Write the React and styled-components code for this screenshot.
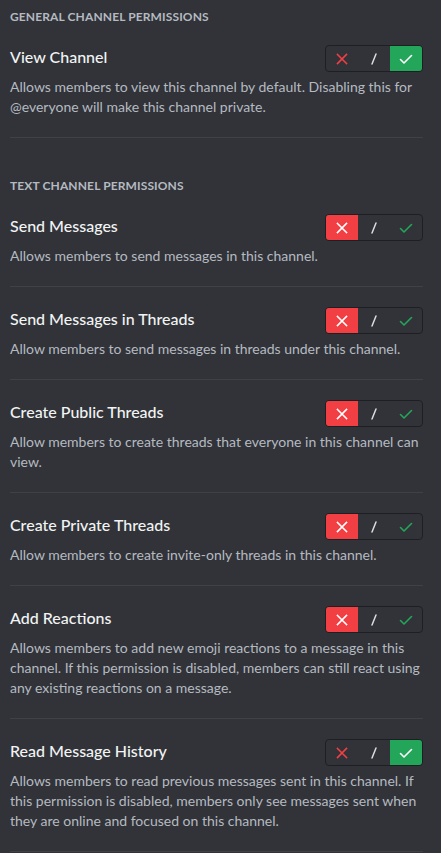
import React from "react";
import styled, { createGlobalStyle } from "styled-components";

const Global = createGlobalStyle`
  html, body { margin: 0; padding: 0; background: #313338; }
  body { font-family: Lato, "Noto Sans", sans-serif; -webkit-font-smoothing: antialiased; }
  * { box-sizing: border-box; }
`;

const Page = styled.div`
  width: 441px;
  min-height: 853px;
  background: #313338;
  padding: 9px 18px 0 10px;
`;

const Section = styled.section`
  margin-top: ${(p) => (p.$first ? "0" : "40px")};
`;

const SectionHeader = styled.h2`
  margin: 0;
  font-size: 12px;
  line-height: 16px;
  font-weight: 700;
  text-transform: uppercase;
  letter-spacing: 0.01em;
  color: #b5bac1;
`;

const Row = styled.div`
  padding: 20px 0;
  border-bottom: 1px solid #3f4147;
`;

const TitleRow = styled.div`
  display: flex;
  align-items: flex-start;
  justify-content: space-between;
`;

const Title = styled.div`
  font-size: 16px;
  line-height: 24px;
  font-weight: 500;
  color: #f2f3f5;
`;

const Desc = styled.div`
  margin-top: 5px;
  margin-right: -4px;
  font-size: 14px;
  line-height: 20px;
  color: #b5bac1;
`;

const Toggle = styled.div`
  display: flex;
  flex-shrink: 0;
  border: 1px solid #1e1f22;
  border-radius: 4px;
  overflow: hidden;
  height: 27px;
`;

const Seg = styled.div`
  width: 32px;
  height: 25px;
  display: flex;
  align-items: center;
  justify-content: center;
  background: ${(p) => (p.$bg ? p.$bg : "transparent")};
`;

const XIcon = ({ color }) => (
  <svg width="12" height="12" viewBox="0 0 12 12">
    <path d="M1.5 1.5 L10.5 10.5 M10.5 1.5 L1.5 10.5" stroke={color} strokeWidth="1.6" strokeLinecap="square" fill="none" />
  </svg>
);

const SlashIcon = () => (
  <svg width="12" height="12" viewBox="0 0 12 12">
    <path d="M8 1 L4 11" stroke="#dbdee1" strokeWidth="1.5" strokeLinecap="round" fill="none" />
  </svg>
);

const CheckIcon = ({ color }) => (
  <svg width="14" height="12" viewBox="0 0 14 12">
    <path d="M1.5 6.5 L5 10 L12.5 2.5" stroke={color} strokeWidth="1.6" strokeLinecap="round" strokeLinejoin="round" fill="none" />
  </svg>
);

const PermToggle = ({ value }) => (
  <Toggle>
    <Seg $bg={value === "deny" ? "#f23f43" : null}>
      <XIcon color={value === "deny" ? "#ffffff" : "#f23f43"} />
    </Seg>
    <Seg>
      <SlashIcon />
    </Seg>
    <Seg $bg={value === "allow" ? "#23a55a" : null}>
      <CheckIcon color={value === "allow" ? "#ffffff" : "#23a55a"} />
    </Seg>
  </Toggle>
);

const sections = [
  {
    title: "General Channel Permissions",
    rows: [
      {
        name: "View Channel",
        value: "allow",
        desc: "Allows members to view this channel by default. Disabling this for @everyone will make this channel private.",
      },
    ],
  },
  {
    title: "Text Channel Permissions",
    rows: [
      { name: "Send Messages", value: "deny", desc: "Allows members to send messages in this channel." },
      { name: "Send Messages in Threads", value: "deny", desc: "Allow members to send messages in threads under this channel." },
      { name: "Create Public Threads", value: "deny", desc: "Allow members to create threads that everyone in this channel can view." },
      { name: "Create Private Threads", value: "deny", desc: "Allow members to create invite-only threads in this channel." },
      {
        name: "Add Reactions",
        value: "deny",
        desc: "Allows members to add new emoji reactions to a message in this channel. If this permission is disabled, members can still react using any existing reactions on a message.",
      },
      {
        name: "Read Message History",
        value: "allow",
        desc: "Allows members to read previous messages sent in this channel. If this permission is disabled, members only see messages sent when they are online and focused on this channel.",
      },
    ],
  },
];

export default function App() {
  return (
    <>
      <Global />
      <Page>
        {sections.map((s, i) => (
          <Section key={s.title} $first={i === 0}>
            <SectionHeader>{s.title}</SectionHeader>
            {s.rows.map((r) => (
              <Row key={r.name}>
                <TitleRow>
                  <Title>{r.name}</Title>
                  <PermToggle value={r.value} />
                </TitleRow>
                <Desc>{r.desc}</Desc>
              </Row>
            ))}
          </Section>
        ))}
      </Page>
    </>
  );
}
